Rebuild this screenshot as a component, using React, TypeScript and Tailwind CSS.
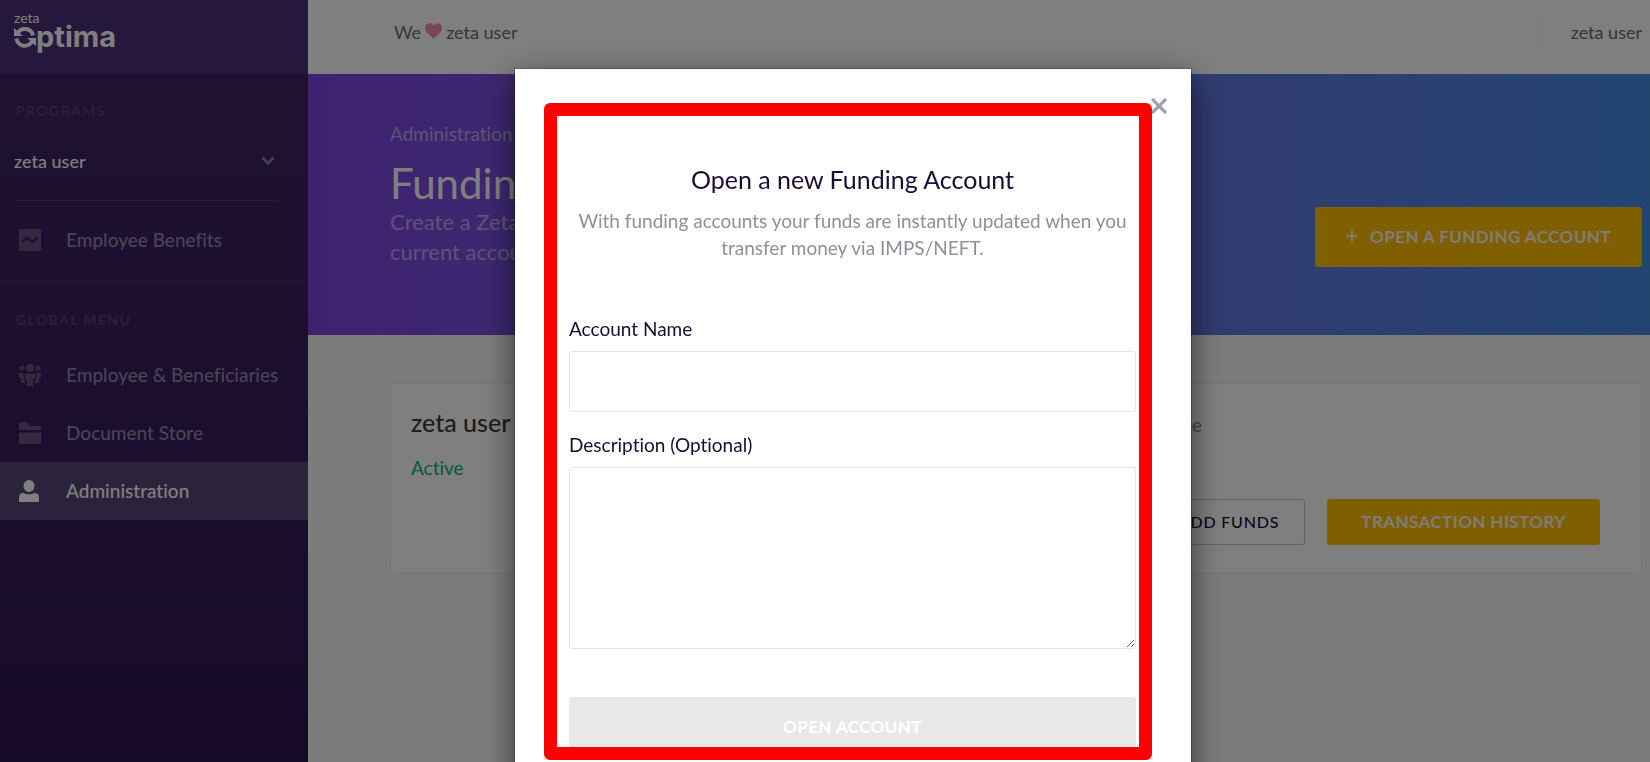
import type { FC, ReactNode } from "react";
import clsx from "clsx";

const ChartIcon: FC = () => (
  <svg width="22" height="22" viewBox="0 0 22 22" aria-hidden="true">
    <rect width="22" height="22" rx="1" fill="currentColor" />
    <path d="M3 12.5 L8 8.5 L13.5 13 L19 8" fill="none" stroke="#3a2262" strokeWidth="2.4" />
  </svg>
);

const PeopleIcon: FC = () => (
  <svg width="22" height="22" viewBox="0 0 22 22" fill="currentColor" aria-hidden="true">
    <circle cx="11" cy="4" r="4" />
    <circle cx="2.9" cy="4" r="2.6" />
    <circle cx="19.1" cy="4" r="2.6" />
    <path d="M6 9.5h10v4.2l-2 2V22H8v-6.300l-2-2z" />
    <path d="M0 9h4.600v5l1.400 2v3H2v-4.500L0 13z" />
    <path d="M22 9h-4.600v5L16 16v3h4v-4.500l2-1.500z" />
  </svg>
);

const FolderIcon: FC = () => (
  <svg width="22" height="22" viewBox="0 0 22 22" fill="currentColor" aria-hidden="true">
    <path d="M0 1.500Q0 0 1.500 0H7l4 4h11v4H0z" />
    <path d="M0 10.500h22V20.500Q22 22 20.500 22h-19Q0 22 0 20.500z" />
  </svg>
);

const UserIcon: FC = () => (
  <svg width="20" height="22" viewBox="0 0 20 22" fill="currentColor" aria-hidden="true">
    <ellipse cx="10" cy="6" rx="5.500" ry="6" />
    <path d="M0 22v-4.500Q0 13 4.500 13q5.500 2.400 11 0Q20 13 20 17.500V22z" />
  </svg>
);

const Logo: FC = () => (
  <a href="#" className="flex flex-col text-white" aria-label="zeta Optima">
    <span className="text-[14px] leading-3">zeta</span>
    <span className="flex items-center text-[29px] leading-[26px] font-bold font-['Inter',sans-serif]">
      <svg width="22" height="22" viewBox="0 0 22 22" aria-hidden="true">
        <path d="M3.500 7.500 A8.300 8.300 0 0 1 19 9.500" fill="none" stroke="currentColor" strokeWidth="4" />
        <path d="M18.500 14.500 A8.300 8.300 0 0 1 2.500 12.500" fill="none" stroke="currentColor" strokeWidth="4" />
        <path d="M0 2v8h9z" fill="currentColor" />
        <path d="M22 20v-8h-9z" fill="currentColor" />
      </svg>
      ptima
    </span>
  </a>
);

interface NavItemProps {
  label: string;
  icon: ReactNode;
  active?: boolean;
}

const NavItem: FC<NavItemProps> = ({ label, icon, active }) => (
  <a
    href="#"
    className={clsx(
      "flex h-[58px] items-center pl-[19px] text-[19px] font-medium",
      active ? "bg-[#574777] text-white" : "text-[#9488a8]"
    )}
  >
    <span className={clsx("w-[47px] shrink-0", !active && "text-[#66557f]")}>{icon}</span>
    {label}
  </a>
);

const Sidebar: FC = () => (
  <aside className="w-[308px] shrink-0 bg-linear-to-b from-[#422462] via-[#381f60] to-[#2f1654]">
    <div className="h-[74px] bg-[#4c2f78] pt-3 pl-3.5">
      <Logo />
    </div>
    <nav>
      <h2 className="mt-[25px] pl-4 text-[14px] leading-6 font-bold tracking-widest text-[#55406f]">
        PROGRAMS
      </h2>
      <button className="mt-[18px] flex h-10 w-full items-center justify-between pr-[33px] pl-3.5 text-[18px] font-medium text-white">
        zeta user
        <svg width="14" height="10" viewBox="0 0 14 10" aria-hidden="true">
          <path d="M1.500 1.500 L7 7.500 L12.500 1.500" fill="none" stroke="#8d81a5" strokeWidth="2.600" />
        </svg>
      </button>
      <hr className="mt-[19px] mr-[30px] mb-2.5 ml-[15px] border-[#4f3575]" />
      <NavItem label="Employee Benefits" icon={<ChartIcon />} />
      <hr className="mt-3 border-[#4f3575]" />
      <h2 className="mt-[26px] mb-3.5 pl-4 text-[14px] leading-6 font-bold tracking-widest text-[#55406f]">
        GLOBAL MENU
      </h2>
      <NavItem label="Employee & Beneficiaries" icon={<PeopleIcon />} />
      <NavItem label="Document Store" icon={<FolderIcon />} />
      <NavItem label="Administration" icon={<UserIcon />} active />
    </nav>
  </aside>
);

const TopBar: FC = () => (
  <header className="flex h-[74px] items-center justify-between bg-white pr-2 pb-2.5 pl-[86px] text-[18px] text-[#6d6a78]">
    <p className="flex items-center gap-1">
      We
      <svg width="17" height="16" viewBox="0 0 17 16" className="mb-0.5" aria-label="love">
        <path
          d="M8.500 15.500C3 11 0 8.500 0 5A4.600 4.600 0 0 1 8.500 2.500 4.600 4.600 0 0 1 17 5C17 8.500 14 11 8.500 15.500z"
          fill="#f48bb4"
        />
      </svg>
      zeta user
    </p>
    <p className="border-l border-[#f3f3f3] pl-7 leading-6">zeta user</p>
  </header>
);

const Hero: FC = () => (
  <section className="flex h-[261px] justify-between bg-linear-to-r from-[#8042e0] to-[#468ce2] pr-2 pl-[82px]">
    <div className="pt-11 text-[22px] leading-[30px] text-white/50">
      <a href="#" className="text-[19px]">
        Administration
      </a>
      <h1 className="mt-2.5 text-[42px] leading-[48px] text-white">Funding</h1>
      <p>
        Create a Zeta
        <br />
        current account
      </p>
    </div>
    <button className="mb-[68px] flex h-[60px] w-[327px] shrink-0 items-center justify-center gap-3 self-end rounded-[3px] bg-[#ffbe00] text-[17px] font-bold tracking-wide text-white/90">
      <svg width="12" height="12" viewBox="0 0 12 12" className="mb-0.5" aria-hidden="true">
        <path d="M6 0.500v11M0.500 6h11" stroke="currentColor" strokeWidth="2" />
      </svg>
      OPEN A FUNDING ACCOUNT
    </button>
  </section>
);

const AccountCard: FC = () => (
  <article className="mt-[49px] mr-[9px] ml-[83px] flex h-[188px] justify-between rounded-[4px] bg-white pr-[41px] pl-5 shadow-[0_0_4px_rgba(0,0,0,0.08)]">
    <div className="pt-[22px]">
      <h2 className="text-[25px] leading-8 font-medium text-[#3b3b3b]">zeta user</h2>
      <p className="mt-[18px] text-[19px] leading-6 text-[#00b386]">Active</p>
    </div>
    <div className="flex w-[463px] flex-col justify-between pt-[27px] pb-[27px]">
      <p className="text-[19px] leading-7 text-[#8d8a99]">Balance</p>
      <div className="flex justify-end gap-[22px]">
        <button className="h-[46px] w-[152px] rounded-[3px] border border-[#c9c9c9] text-[16px] font-medium tracking-wider text-[#1a0d33]">
          ADD FUNDS
        </button>
        <button className="h-[46px] w-[273px] rounded-[3px] bg-[#ffbe00] text-[17px] font-bold tracking-wide text-white/90">
          TRANSACTION HISTORY
        </button>
      </div>
    </div>
  </article>
);

const FundingAccountDialog: FC = () => (
  <div className="fixed inset-0 flex items-start justify-center overflow-hidden bg-black/50 pt-[69px] pl-14">
    <div
      role="dialog"
      aria-labelledby="dialog-title"
      className="relative min-h-[800px] w-[676px] shrink-0 bg-white pt-[94px] pr-[55px] pl-[54px] text-[#1a0d33] shadow-[0_0_0_1px_rgba(0,0,0,0.2),0_10px_30px_rgba(0,0,0,0.6)]"
    >
      <button aria-label="Close" className="absolute top-[29px] right-6 text-[#a29eaa]">
        <svg width="16" height="16" viewBox="0 0 16 16">
          <path d="M1 1 L15 15 M15 1 L1 15" stroke="currentColor" strokeWidth="3.200" />
        </svg>
      </button>

      <h2 id="dialog-title" className="text-center text-[25px] leading-8">
        Open a new Funding Account
      </h2>
      <p className="mt-3 text-center text-[19px] leading-[27px] text-[#918d9b]">
        With funding accounts your funds are instantly updated when you transfer money via
        IMPS/NEFT.
      </p>

      <form className="mt-14 flex flex-col text-[19px]">
        <label htmlFor="account-name" className="leading-6">
          Account Name
        </label>
        <input
          id="account-name"
          type="text"
          className="mt-2.5 h-[61px] rounded-[3px] border border-[#e6e6e6] px-4 outline-none"
        />
        <label htmlFor="description" className="mt-[21px] leading-6">
          Description (Optional)
        </label>
        <textarea
          id="description"
          className="mt-2.5 h-[182px] rounded-[3px] border border-[#e6e6e6] p-4 outline-none"
        />
        <button
          type="submit"
          disabled
          className="mt-12 h-[60px] rounded-[3px] bg-[#e8e8e8] text-[17px] font-bold tracking-wide text-white"
        >
          OPEN ACCOUNT
        </button>
      </form>

      {/* highlight around the form */}
      <div className="pointer-events-none absolute top-[34px] right-[39px] left-[29px] h-[657px] rounded-[6px] border-[13px] border-[#ff0000]" />
    </div>
  </div>
);

const App: FC = () => (
  <div className="flex min-h-screen bg-[#f9f9f9] font-['Lato','Liberation_Sans',sans-serif] [font-variant-ligatures:none]">
    <Sidebar />
    <main className="min-w-0 flex-1">
      <TopBar />
      <Hero />
      <AccountCard />
    </main>
    <FundingAccountDialog />
  </div>
);

export default App;
